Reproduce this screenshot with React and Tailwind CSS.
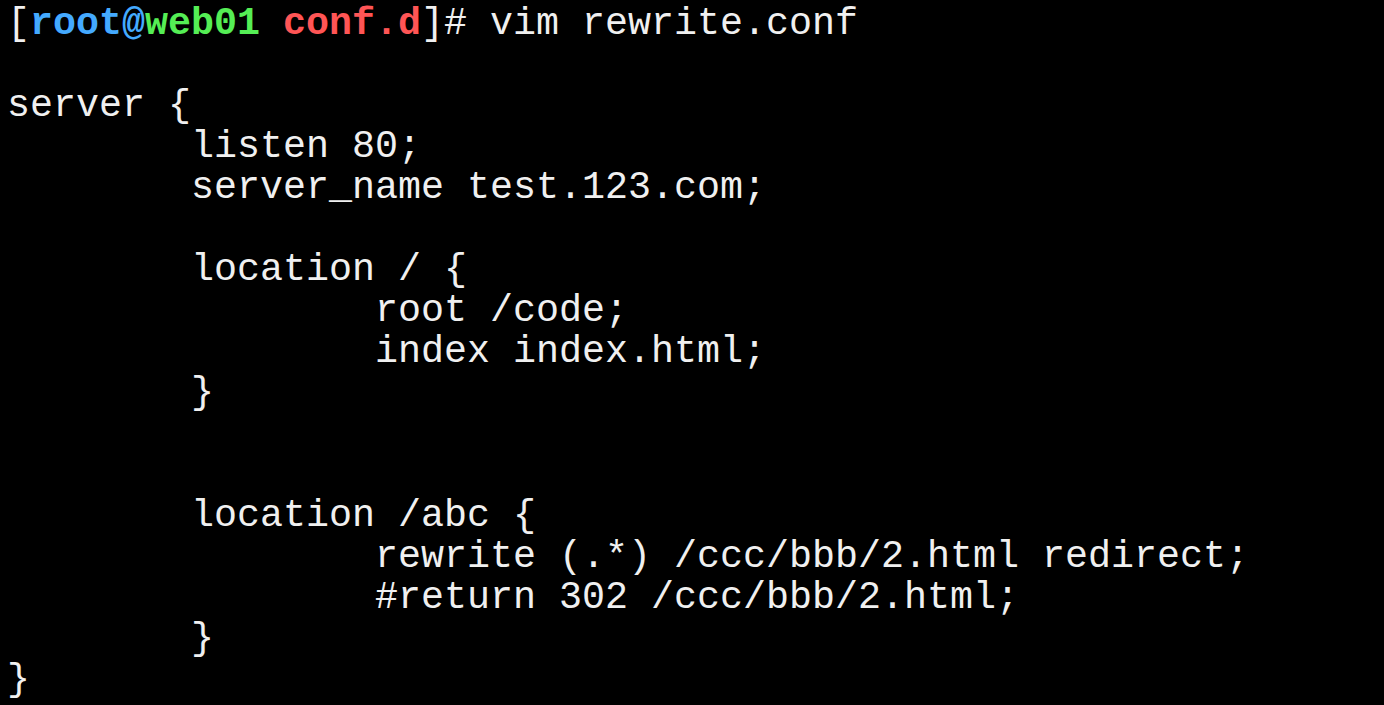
import React from "react";

const lines = [
  "",
  "server {",
  "        listen 80;",
  "        server_name test.123.com;",
  "",
  "        location / {",
  "                root /code;",
  "                index index.html;",
  "        }",
  "",
  "",
  "        location /abc {",
  "                rewrite (.*) /ccc/bbb/2.html redirect;",
  "                #return 302 /ccc/bbb/2.html;",
  "        }",
  "}",
];

export default function App() {
  return (
    <div className="w-[1384px] h-[705px] bg-black overflow-hidden">
      <div
        className="pl-[7px] pt-[4px] text-[38.33px] leading-[41px] text-[#f0f0f0] whitespace-pre"
        style={{
          fontFamily:
            '"Courier New", "Nimbus Mono PS", "Nimbus Mono L", FreeMono, "Liberation Mono", monospace',
        }}
      >
        {/* prompt line */}
        <div>
          [<span className="font-bold text-[#44aaff]">root@</span>
          <span className="font-bold text-[#55ee55]">web01</span>{" "}
          <span className="font-bold text-[#ff5555]">conf.d</span>]# vim rewrite.conf
        </div>
        {lines.map((line, i) => (
          <div key={i} className="h-[41px]">
            {line}
          </div>
        ))}
      </div>
    </div>
  );
}
